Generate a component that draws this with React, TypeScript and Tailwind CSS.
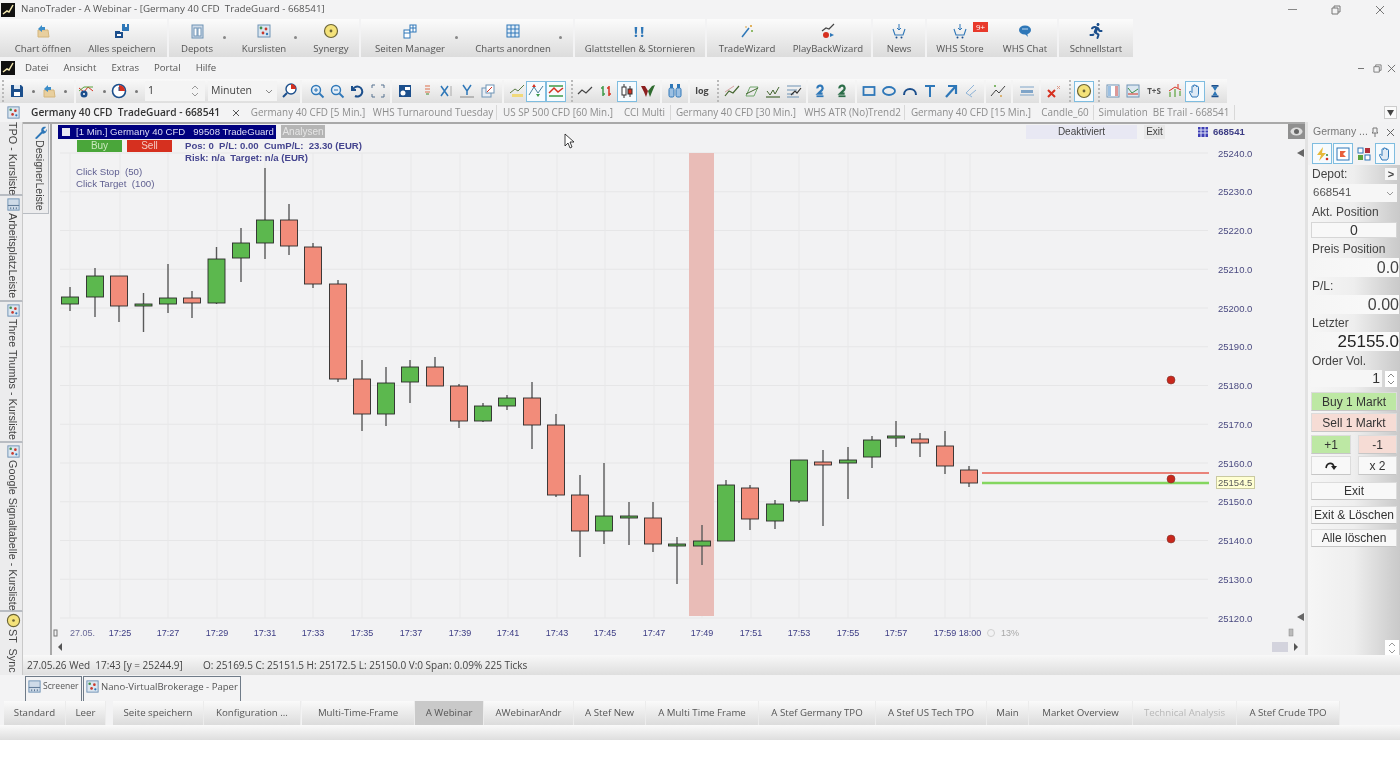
import React from 'react';
import { FaRunning } from 'react-icons/fa';

const BLUE = '#2e77b8';
const NAVY = '#1c4f8c';

function I({ s = 16, children }: { s?: number; children: React.ReactNode }) {
  return <svg className="flex-none" width={s} height={s} viewBox="0 0 16 16" fill="none">{children}</svg>;
}

const Logo = () => (
  <svg width="14" height="14" viewBox="0 0 14 14"><rect width="14" height="14" fill="#111" /><path d="M2 11 L6 8 L8 9 L12 2" stroke="#f4e9b0" strokeWidth="1.5" fill="none" /></svg>
);
const FolderOpen = () => (
  <I><path d="M3 7h10l1 7H3z" fill="#e8cf9e" stroke="#d5b67c" /><path d="M3 6 L7 2 V4 H10 V7 H7 V9z" fill="#3c8dc9" /></I>
);
const SaveAll = () => (
  <I><path d="M1 8h5v1h3v6H1z" fill={NAVY} /><path d="M8 1h3v3h2V1h2v7H8z" fill={BLUE} /><rect x="3" y="11" width="4" height="2" fill="#fff" /></I>
);
const Floppy = () => (
  <I><path d="M2 2h10l2 2v10H2z" fill={NAVY} /><rect x="5" y="2" width="6" height="4" fill="#dfe9f3" /><rect x="5" y="9" width="6" height="4" fill="#fff" /></I>
);
const Depots = () => (
  <I><rect x="3" y="2" width="11" height="13" fill="#cfdbe8" stroke="#6f93b5" /><rect x="5" y="5" width="3" height="8" fill="#fff" stroke="#6f93b5" /><rect x="9" y="5" width="3" height="8" fill="#fff" stroke="#6f93b5" /></I>
);
const Kurs = ({ s = 16 }: { s?: number }) => (
  <I s={s}><rect x="2" y="2" width="12" height="12" fill="#dbe6f0" stroke="#6f93b5" /><circle cx="5" cy="5" r="1.4" fill="#3f8f4a" /><circle cx="10" cy="6" r="1.4" fill="#c9382c" /><circle cx="7" cy="10" r="1.4" fill="#c9382c" /><circle cx="11" cy="11" r="1.2" fill="#2e77b8" /></I>
);
const Synergy = ({ s = 16 }: { s?: number }) => (
  <I s={s}><circle cx="8" cy="8" r="6.5" fill="#f4e27a" stroke="#6b6436" strokeWidth="1.2" /><circle cx="8" cy="8" r="1.4" fill="#6b6436" /></I>
);
const Pages = () => (
  <I><rect x="2" y="7" width="6" height="8" fill="#fff" stroke={BLUE} /><rect x="8" y="2" width="6" height="7" fill="#fff" stroke={BLUE} /><path d="M2 10h6M11 2v7M8 5h6" stroke={BLUE} /></I>
);
const GridIc = () => (
  <I><rect x="2" y="2" width="12" height="12" fill="#e4eef7" stroke={BLUE} /><path d="M2 6h12M2 10h12M6 2v12M10 2v12" stroke={BLUE} /></I>
);
const Wand = () => (
  <I><path d="M3 14 L10 5" stroke={BLUE} strokeWidth="1.5" /><path d="M12 2v2M11 3h2" stroke="#d99a2b" /><circle cx="13" cy="8" r="1" fill="#6fa93c" /><circle cx="7" cy="4" r=".8" fill="#d99a2b" /></I>
);
const PlayBack = () => (
  <I><path d="M2 8 L6 5 L9 6 L14 1" stroke="#444" strokeWidth="1.2" /><circle cx="6" cy="12" r="3" fill="#d6301f" /><path d="M10 10 L14 12 L10 14z" fill={BLUE} /></I>
);
const Basket = () => (
  <I><path d="M2 6 L4 12 H12 L14 6" stroke={BLUE} strokeWidth="1.1" /><path d="M8 1v6M6 5l2 2 2-2" stroke={BLUE} /><circle cx="5.5" cy="14.5" r="1" fill={NAVY} /><circle cx="10.5" cy="14.5" r="1" fill={NAVY} /></I>
);
const Chat = () => (
  <I><ellipse cx="8" cy="7" rx="6" ry="4.5" fill={BLUE} /><path d="M7 10 L11 14 L10 10z" fill={BLUE} /><path d="M5 6h6" stroke="#bcd7ee" /></I>
);
const Doc = ({ s = 16 }: { s?: number }) => <I s={s}><rect x="2" y="2" width="12" height="12" fill="#cfdbe8" stroke="#6f93b5" /><path d="M2 9h12M5 11v2M8 11v2M11 11v2" stroke="#55718f" /></I>;

const Zoom = ({ m }: { m: boolean }) => (
  <I><circle cx="7" cy="7" r="4.5" stroke={BLUE} strokeWidth="1.4" fill="#e4eef7" /><path d="M10.5 10.5 L14.5 14.5" stroke={BLUE} strokeWidth="1.8" /><path d={m ? 'M5 7h4M7 5v4' : 'M5 7h4'} stroke={BLUE} /></I>
);
const Undo = () => <I><path d="M3 3v4h4M3.5 7A5 5 0 1 1 6 13" stroke={NAVY} strokeWidth="2" /></I>;
const Fit = () => <I><path d="M2 2h3M2 2v3M11 2h3v3M2 14h3M2 11v3M14 11v3h-3" stroke="#55718f" /></I>;
const IndIc = () => (
  <I><path d="M1 5 L6 9 L10 4 L15 8" stroke="#d6301f" /><path d="M1 8 L6 4 L15 4" stroke="#5ba33c" /><circle cx="6" cy="11" r="3.5" fill={NAVY} /><circle cx="6" cy="11" r="1" fill="#fff" /></I>
);
const Clock = () => (
  <I><circle cx="8" cy="8" r="6.5" fill="#fff" stroke={NAVY} strokeWidth="1.6" /><path d="M8 2a6 6 0 0 1 6 6H8z" fill="#d6301f" /><path d="M8 4v4" stroke={NAVY} /></I>
);
const ClockPin = () => (
  <I><circle cx="10" cy="6" r="5" fill="#fff" stroke={NAVY} strokeWidth="1.4" /><path d="M10 1a5 5 0 0 1 5 5h-5z" fill="#d6301f" /><path d="M6 10 L2 14" stroke={NAVY} strokeWidth="2" /></I>
);
const Info = () => <I><rect x="2" y="2" width="12" height="12" fill={NAVY} /><rect x="8" y="4" width="5" height="3" fill="#fff" /><circle cx="6" cy="10" r="2.5" fill="#fff" /></I>;
const Stack = () => <I><path d="M6 3h5M6 6h5M6 9h5" stroke="#e39a82" strokeWidth="1.4" /><path d="M7 11h3" stroke="#7aa86a" strokeWidth="1.5" /></I>;
const XBar = () => <I><path d="M3 3 L10 13 M10 3 L3 13" stroke={BLUE} strokeWidth="1.5" /><path d="M13 3v10" stroke="#aaa" /></I>;
const YBar = () => <I><path d="M4 2 L8 8 L12 2 M8 8v4" stroke={BLUE} strokeWidth="1.5" /><path d="M1 14h14" stroke="#888" /></I>;
const Copy = () => <I><rect x="2" y="5" width="9" height="9" fill="#e7edf4" stroke="#6f93b5" /><rect x="6" y="2" width="8" height="8" fill="#fff" stroke="#6f93b5" /><path d="M7 9 L12 4" stroke="#d6301f" /></I>;
const LineY = () => <I><path d="M1 10 L6 6 L9 8 L15 2" stroke="#5a7b45" /><rect x="3" y="11" width="11" height="3" fill="#f0d97a" /></I>;
const LineG = () => <I><path d="M1 12 L6 4 L10 10 L15 3" stroke="#4a7f9a" /><path d="M6 1l2 3H4z" fill="#d6301f" /><path d="M10 14l2-3H8z" fill="#3f9a4a" /></I>;
const CrossG = () => <I><path d="M1 3h14M1 13h14" stroke="#3f9a4a" strokeWidth="1.5" /><path d="M1 10 L6 5 L10 9 L15 5" stroke="#d6301f" strokeWidth="1.5" /></I>;
const Line = () => <I><path d="M1 11 L5 7 L9 10 L15 4" stroke="#444" strokeWidth="1.2" /></I>;
const Bars = () => <I><path d="M5 3v10M3 5h2M5 11h2" stroke="#3f9a4a" strokeWidth="1.5" /><path d="M11 3v10M9 5h2M11 11h2" stroke="#d6301f" strokeWidth="1.5" /></I>;
const Candles = () => <I><path d="M5 1v14" stroke="#333" /><rect x="3" y="4" width="4" height="8" fill="#fff" stroke="#333" /><path d="M11 3v11" stroke="#333" /><rect x="9" y="6" width="4" height="5" fill="#d6301f" stroke="#333" /></I>;
const Heiken = () => <I><path d="M1 3 L4 9 L6 14 L8 8 L5 3z" fill="#8c1f1f" /><path d="M15 2 L12 9 L10 14 L8 8 L12 3z" fill="#2f6b2f" /></I>;
const Binoc = () => <I><rect x="2" y="5" width="5" height="9" rx="1.5" fill="#9cc0e2" stroke={BLUE} /><rect x="9" y="5" width="5" height="9" rx="1.5" fill="#9cc0e2" stroke={BLUE} /><rect x="3" y="1" width="3" height="4" fill={BLUE} /><rect x="10" y="1" width="3" height="4" fill={BLUE} /></I>;
const Tr1 = () => <I><path d="M1 13 L5 8 L9 10 L15 3" stroke="#44652f" strokeWidth="1.2" /><path d="M1 9 L10 3" stroke="#d6a0a0" /></I>;
const Tr2 = () => <I><path d="M2 13 L6 4 H14 L10 13z" stroke="#6fa56a" /><path d="M2 11 L14 5" stroke="#44652f" /></I>;
const Tr3 = () => <I><path d="M1 14h14" stroke="#44652f" strokeWidth="1.2" /><path d="M2 8 L5 12 L8 7 L10 11 L14 4" stroke="#44652f" /></I>;
const Tr4 = () => <I><path d="M1 3h14M1 7h10M1 11h7M1 14h12" stroke="#6f93b5" /><path d="M5 12 L9 8 L11 10 L15 5" stroke="#333" strokeWidth="1.2" /></I>;
const Two = ({ c }: { c: string }) => <I s={14}><path d="M5 5a3 3 0 1 1 5.5 1.5L6 11h5" stroke={c} strokeWidth="2.6" /><path d="M4 14h8" stroke={c} strokeWidth="2" /></I>;
const Curve = () => <I><path d="M2 12c0-8 12-8 12 0" stroke={NAVY} strokeWidth="2" /></I>;
const Arrow = () => <I><path d="M3 14 L12 4" stroke={BLUE} strokeWidth="2.2" /><path d="M5 3h8v8" stroke={BLUE} strokeWidth="2.2" /></I>;
const Fib = () => <I><path d="M11 2 L3 10 L9 14 M13 7 L7 12" stroke="#8fb4d8" /></I>;
const Wave = () => <I><path d="M1 13 L6 7 L9 10 L15 3" stroke="#444" /><circle cx="5" cy="3" r="1" fill="#5ba33c" /><circle cx="11" cy="13" r="1" fill="#d6a04b" /></I>;
const Band = () => <I><path d="M1 4h14" stroke="#7fa4c8" /><rect x="2" y="7" width="12" height="3" fill="#7fa4c8" /><path d="M1 12h14" stroke="#7fa4c8" /></I>;
const Cols = () => <I><rect x="2" y="2" width="12" height="12" fill="#fff" stroke="#6f93b5" /><rect x="3" y="3" width="3" height="10" fill="#9cc0e2" /><rect x="10" y="3" width="3" height="10" fill="#d99" /></I>;
const ChartBox = () => <I><rect x="2" y="2" width="12" height="12" fill="#dce7f1" stroke="#6f93b5" /><path d="M3 5 L7 10 L13 6" stroke="#3f8f4a" /><path d="M3 11h10" stroke="#d6301f" /></I>;
const Tree = () => <I><path d="M2 8 L8 4 L14 7" stroke="#d6301f" /><path d="M3 9v5M8 6v8M13 8v5" stroke="#5ba33c" strokeWidth="1.2" /><path d="M11 1v4" stroke="#d6301f" /></I>;
const Hand = () => <I><path d="M5 14 L2.5 9.5 C2 8 4 8 5 9.5 V3.5 C5 2.5 6.5 2.5 6.5 3.5 V2.5 C6.5 1.5 8 1.5 8 2.5 V3 C8 2 9.7 2 9.7 3 V4 C9.7 3 11.5 3 11.5 4.2 V10 C11.5 12 11 13 10 14z" fill="#dfeaf5" stroke={BLUE} /></I>;
const Hour = () => <I s={14}><path d="M4 2h8M4 14h8" stroke={NAVY} strokeWidth="2" /><path d="M5 3 L8 8 L5 13h6L8 8 L11 3z" fill={BLUE} /></I>;
const Bolt = () => <I><path d="M9 1 L3 9h4l-2 6 7-8H8z" fill="#e6b93a" /><circle cx="13" cy="13" r="1.3" fill="#d6301f" /><circle cx="13" cy="9" r="1.1" fill="#3f8f4a" /></I>;
const Flag = () => <I><rect x="2" y="2" width="12" height="12" fill="#fff" stroke={BLUE} /><path d="M5 5h6L8 8l3 3H5z" fill="#e8603c" /></I>;
const Tiles = () => <I><rect x="2" y="2" width="5" height="5" fill="#fff" stroke={BLUE} /><rect x="9" y="2" width="5" height="5" fill="#b22f3a" /><rect x="2" y="9" width="5" height="5" fill="#5ba33c" /><rect x="9" y="9" width="5" height="5" fill="#fff" stroke={BLUE} /></I>;

type RibbonBtn = { label: string; w: string; icon: React.ReactNode; drop?: string };

const ribbon: { gap: string; items: RibbonBtn[] }[] = [
  { gap: 'w-[167px] pl-[4px]', items: [
    { label: 'Chart öffnen', w: 'w-[78px]', icon: <FolderOpen /> },
    { label: 'Alles speichern', w: 'w-[80px]', icon: <SaveAll /> },
  ] },
  { gap: 'w-[190px]', items: [
    { label: 'Depots', w: 'w-[56px]', icon: <Depots />, drop: 'right-[-1px]' },
    { label: 'Kurslisten', w: 'w-[78px]', icon: <Kurs />, drop: 'right-[6px]' },
    { label: 'Synergy', w: 'w-[56px]', icon: <Synergy /> },
  ] },
  { gap: 'w-[212px]', items: [
    { label: 'Seiten Manager', w: 'w-[98px]', icon: <Pages />, drop: 'right-[1px]' },
    { label: 'Charts anordnen', w: 'w-[108px]', icon: <GridIc />, drop: 'right-[5px]' },
  ] },
  { gap: 'w-[130px]', items: [
    { label: 'Glattstellen & Stornieren', w: 'w-[130px]', icon: <span className="text-[15px] leading-4 font-bold tracking-[2px] text-[#2e77b8]">!!</span> },
  ] },
  { gap: 'w-[164px]', items: [
    { label: 'TradeWizard', w: 'w-[80px]', icon: <Wand /> },
    { label: 'PlayBackWizard', w: 'w-[82px]', icon: <PlayBack /> },
  ] },
  { gap: 'w-[52px]', items: [{ label: 'News', w: 'w-[52px]', icon: <Basket /> }] },
  { gap: 'w-[130px]', items: [
    { label: 'WHS Store', w: 'w-[66px]', icon: <Basket /> },
    { label: 'WHS Chat', w: 'w-[64px]', icon: <Chat /> },
  ] },
  { gap: 'w-[74px]', items: [{ label: 'Schnellstart', w: 'w-[74px]', icon: <FaRunning className="text-[#1c4f8c]" size={16} /> }] },
];

const Box = ({ children }: { children: React.ReactNode }) => (
  <div className="w-[20px] h-[21px] flex items-center justify-center border border-[#7fbde0] bg-[#f6fbfe]">{children}</div>
);
const Grip = () => <div className="h-[22px] border-l-2 border-dotted border-[#b9b9b9]" />;
const Sep = () => <div className="h-[23px] w-[2px] bg-[#f4f4f4]" />;
const Drop = () => <div className="w-[3px] h-[3px] rounded-full bg-[#777]" />;

const tools: { c: number; w?: number; el: React.ReactNode }[] = [
  { c: 3, w: 2, el: <Grip /> },
  { c: 17, el: <Floppy /> }, { c: 33, w: 6, el: <Drop /> }, { c: 49, el: <FolderOpen /> }, { c: 65, w: 6, el: <Drop /> },
  { c: 75, w: 2, el: <Sep /> },
  { c: 86, el: <IndIc /> }, { c: 104, w: 6, el: <Drop /> }, { c: 119, el: <Clock /> }, { c: 136, w: 6, el: <Drop /> },
  { c: 175, w: 60, el: (
    <div className="w-[60px] h-[20px] bg-[#f4f4f4] flex items-center justify-between pl-[3px] pr-[6px] text-[10.5px] text-[#333]">
      <span>1</span>
      <svg width="8" height="14" viewBox="0 0 8 14" fill="none"><path d="M1 5 L4 2 L7 5 M1 9 L4 12 L7 9" stroke="#999" /></svg>
    </div>
  ) },
  { c: 242.5, w: 69, el: (
    <div className="w-[69px] h-[20px] bg-[#f4f4f4] flex items-center justify-between pl-[3px] pr-[4px] text-[10.5px] text-[#444]">
      <span>Minuten</span>
      <svg width="8" height="8" viewBox="0 0 8 8" fill="none"><path d="M1 3 L4 6 L7 3" stroke="#888" /></svg>
    </div>
  ) },
  { c: 289, el: <ClockPin /> },
  { c: 301, w: 2, el: <Sep /> },
  { c: 317, el: <Zoom m /> }, { c: 337, el: <Zoom m={false} /> }, { c: 357, el: <Undo /> }, { c: 378, el: <Fit /> },
  { c: 391, w: 2, el: <Sep /> },
  { c: 405, el: <Info /> }, { c: 427, el: <Stack /> }, { c: 446, el: <XBar /> }, { c: 467, el: <YBar /> }, { c: 488, el: <Copy /> },
  { c: 503, w: 2, el: <Sep /> },
  { c: 517, el: <LineY /> }, { c: 536, el: <Box><LineG /></Box> }, { c: 556, el: <Box><CrossG /></Box> },
  { c: 572, w: 2, el: <Grip /> },
  { c: 585, el: <Line /> }, { c: 606, el: <Bars /> }, { c: 627, el: <Box><Candles /></Box> }, { c: 648, el: <Heiken /> },
  { c: 661, w: 2, el: <Sep /> },
  { c: 675, el: <Binoc /> },
  { c: 689, w: 2, el: <Sep /> },
  { c: 702, el: <span className="text-[9px] font-bold text-[#444]">log</span> },
  { c: 718, w: 2, el: <Grip /> },
  { c: 732, el: <Tr1 /> }, { c: 752, el: <Tr2 /> }, { c: 773, el: <Tr3 /> }, { c: 794, el: <Tr4 /> },
  { c: 807, w: 2, el: <Sep /> },
  { c: 820, el: <Two c={BLUE} /> }, { c: 842, el: <Two c="#2c6e49" /> },
  { c: 856, w: 2, el: <Sep /> },
  { c: 869, el: <I><rect x="2.5" y="4" width="11" height="8" stroke={BLUE} strokeWidth="1.8" /></I> },
  { c: 889, el: <I><ellipse cx="8" cy="8" rx="6" ry="4" stroke={BLUE} strokeWidth="1.8" /></I> },
  { c: 910, el: <Curve /> },
  { c: 930, el: <I><path d="M3 3h10M8 3v11" stroke={BLUE} strokeWidth="2" /></I> },
  { c: 951, el: <Arrow /> }, { c: 971, el: <Fib /> },
  { c: 985, w: 2, el: <Sep /> },
  { c: 998, el: <Wave /> },
  { c: 1012, w: 2, el: <Sep /> },
  { c: 1027, el: <Band /> },
  { c: 1040, w: 2, el: <Sep /> },
  { c: 1053, el: <I><path d="M3 7 L10 14 M10 7 L3 14" stroke="#d6301f" strokeWidth="2" /><path d="M12 3 L15 6 M15 3 L12 6" stroke="#d98" /></I> },
  { c: 1070, w: 2, el: <Grip /> },
  { c: 1084, el: <Box><Synergy /></Box> },
  { c: 1099, w: 2, el: <Grip /> },
  { c: 1113, el: <Cols /> }, { c: 1133, el: <ChartBox /> },
  { c: 1154, el: <span className="text-[8px] font-bold text-[#555]">T+S</span> },
  { c: 1175, el: <Tree /> }, { c: 1195, el: <Box><Hand /></Box> }, { c: 1215, el: <Hour /> },
];

function Toolbar() {
  let right = 0;
  return (
    <div className="h-[24px] w-[1227px] flex items-center bg-gradient-to-b from-[#f9f9f9] to-[#dfdfdf]">
      {tools.map((t, i) => {
        const w = t.w ?? 20;
        const ml = t.c - w / 2 - right;
        right = t.c + w / 2;
        return (
          <div key={i} className="flex-none flex items-center justify-center h-full" style={{ width: w, marginLeft: ml }}>
            {t.el}
          </div>
        );
      })}
    </div>
  );
}

const docTabs = [
  { t: 'Germany 40 CFD [5 Min.]', w: 'w-[124px]' },
  { t: 'WHS Turnaround Tuesday', w: 'w-[127px]', sep: true },
  { t: 'US SP 500 CFD [60 Min.]', w: 'w-[122px]' },
  { t: 'CCI Multi', w: 'w-[52px]', sep: true },
  { t: 'Germany 40 CFD [30 Min.]', w: 'w-[130px]' },
  { t: 'WHS ATR (No)Trend2', w: 'w-[104px]', sep: true },
  { t: 'Germany 40 CFD [15 Min.]', w: 'w-[132px]' },
  { t: 'Candle_60', w: 'w-[57px]', sep: true },
  { t: 'Simulation  BE Trail - 668541', w: 'w-[141px]', sep: true },
];

const leftTabs = [
  { t: 'TPO - Kursliste', h: 'h-[74px]', icon: null },
  { t: 'ArbeitsplatzLeiste', h: 'h-[106px]', icon: <Doc s={15} /> },
  { t: 'Three Thumbs - Kursliste', h: 'h-[141px]', icon: <Kurs s={15} /> },
  { t: 'Google Signaltabelle - Kursliste', h: 'h-[169px]', icon: <Kurs s={15} /> },
  { t: 'ST  Sync', h: 'h-[63px]', icon: <Synergy s={15} /> },
];

// x, wick top, wick bottom, body top, body bottom, colour
const candles: [number, number, number, number, number, 'g' | 'r'][] = [
  [70, 287, 311, 297, 304, 'g'], [95, 268, 317, 276, 297, 'g'], [119, 276, 322, 276, 306, 'r'], [143.5, 293, 332, 304, 306, 'g'],
  [168, 264, 313, 298, 304, 'g'], [192, 291, 318, 298, 303, 'r'], [216.5, 247, 304, 259, 303, 'g'], [241, 228, 282, 243, 258, 'g'],
  [265, 168, 259, 220, 243, 'g'], [289, 204, 255, 220, 246, 'r'], [313, 243, 288, 247, 284, 'r'], [338, 280, 382, 284, 379, 'r'],
  [362, 360, 431, 379, 414, 'r'], [386, 367, 426, 383, 414, 'g'], [410, 360, 403, 367, 382, 'g'], [435, 357, 386, 367, 386, 'r'],
  [459, 384, 428, 386, 421, 'r'], [483, 403, 422, 406, 421, 'g'], [507, 395, 410, 398, 406, 'g'], [532, 382, 449, 398, 425, 'r'],
  [556, 414, 497, 425, 495, 'r'], [580, 475, 557, 495, 531, 'r'], [604, 463, 544, 516, 531, 'g'], [629, 502, 545, 516, 518, 'g'],
  [653, 502, 552, 518, 544, 'r'], [677, 537, 584, 544, 546, 'g'], [702, 525, 565, 541, 546, 'g'], [726, 480, 541, 485, 541, 'g'],
  [750, 485, 530, 488, 519, 'r'], [775, 500, 529, 504, 521, 'g'], [799, 460, 503, 460, 501, 'g'], [823, 450, 526, 462, 465, 'r'],
  [848, 447, 499, 460, 463, 'g'], [872, 436, 468, 440, 457, 'g'], [896, 421, 447, 436, 438, 'g'], [920, 433, 457, 439, 443, 'r'],
  [945, 431, 474, 446, 466, 'r'], [969, 466, 487, 470, 483, 'r'],
];

const prices = [25240, 25230, 25220, 25210, 25200, 25190, 25180, 25170, 25160, 25150, 25140, 25130, 25120];
const times: [number, string][] = [
  [120, '17:25'], [168, '17:27'], [217, '17:29'], [265, '17:31'], [313, '17:33'], [362, '17:35'], [411, '17:37'], [460, '17:39'],
  [508, '17:41'], [557, '17:43'], [605, '17:45'], [654, '17:47'], [702, '17:49'], [751, '17:51'], [799, '17:53'], [848, '17:55'],
  [896, '17:57'], [945, '17:59'], [970, '18:00'],
];

function Chart() {
  const py = (p: number) => 153 + (25240 - p) * 3.875;
  return (
    <svg className="absolute inset-0" width="1253" height="533" viewBox="52 122 1253 533">
      <g>
        {prices.map((p) => <line key={p} x1="60" x2="1208" y1={py(p)} y2={py(p)} stroke="#e6e6e7" />)}
        {[70, ...times.map((t) => t[0])].map((x) => <line key={x} x1={x} x2={x} y1="153" y2="618" stroke="#e8e8e9" />)}
      </g>
      <rect x="689" y="153" width="25" height="463" fill="#e9bcb7" />
      {candles.map(([x, wt, wb, bt, bb, c]) => (
        <g key={x}>
          <line x1={x} x2={x} y1={wt} y2={wb} stroke="#5a5a5a" strokeWidth="1.4" />
          <rect x={x - 8.5} y={bt} width="17" height={bb - bt} fill={c === 'g' ? '#5cb84e' : '#f28c7a'} stroke="#2c2c2c" strokeWidth="0.9" />
        </g>
      ))}
      <line x1="982" x2="1209" y1="473" y2="473" stroke="#e9837a" strokeWidth="2" />
      <line x1="982" x2="1209" y1="483" y2="483" stroke="#84d65f" strokeWidth="2.6" />
      {[380, 479, 539].map((y) => <circle key={y} cx="1171" cy={y} r="4" fill="#c9271c" stroke="#7c3a30" strokeWidth=".6" />)}
      <g className="text-[9.5px]" fill="#4a4a80">
        {prices.map((p) => <text key={p} x="1218" y={py(p) + 3.5}>{p}.0</text>)}
      </g>
      <rect x="1216.5" y="476.5" width="38" height="12" fill="#ffffd2" stroke="#c9c9a0" />
      <text x="1218" y="486" className="text-[9.5px]" fill="#5a5a5a">25154.5</text>
      <g className="text-[9px]" fill="#3c3c84">
        <text x="70" y="636" fill="#6a6a98">27.05.</text>
        {times.map(([x, t]) => <text key={t} x={x} y="636" textAnchor="middle">{t}</text>)}
      </g>
      <circle cx="991" cy="633" r="3.5" fill="none" stroke="#d0d0d0" />
      <text x="1001" y="636" className="text-[9px]" fill="#a8a8a8">13%</text>
      <rect x="54" y="630" width="3" height="6" fill="none" stroke="#777" />
      <rect x="1289" y="629" width="4" height="7" fill="#bbb" stroke="#888" strokeWidth=".5" />
      <path d="M1304 149v8l-7-4z" fill="#666" />
      <path d="M1304 613v8l-7-4z" fill="#666" />
      <path d="M62 643v8l-4-4z" fill="#555" />
      <rect x="1272" y="642" width="16" height="10" fill="#d3d3dd" />
      <path d="M1294 643v8l4-4z" fill="#555" />
      <path d="M565 134v12l3-3 2 5 2-1-2-5h4z" fill="#fff" stroke="#111" strokeWidth=".8" />
    </svg>
  );
}

const btn = 'flex items-center justify-center text-[12px] text-[#333] bg-[#f8f8f8] border border-[#dcdcdc] border-b-[#c6c6c6]';
const Lbl = ({ children, cls }: { children: React.ReactNode; cls: string }) => (
  <div className={`pl-[4px] text-[12px] leading-[14px] text-[#444] ${cls}`}>{children}</div>
);
const Spin = () => (
  <div className="w-[12px] h-[16px] bg-white flex flex-col items-center justify-center">
    <svg width="8" height="12" viewBox="0 0 8 12" fill="none"><path d="M1 4 L4 1 L7 4 M1 8 L4 11 L7 8" stroke="#888" /></svg>
  </div>
);

function RightPanel() {
  return (
    <div className="w-[92px] h-[533px] flex flex-col bg-gradient-to-r from-[#f6f6f6] via-[#eeeeee] to-[#c9c9c9] font-['Liberation_Sans',sans-serif]">
      <div className="h-[20px] flex items-center bg-[#f2f2f3] text-[10.5px] text-[#777] pl-[5px]">
        <span className="w-[57px] whitespace-nowrap">Germany ...</span>
        <svg width="10" height="10" viewBox="0 0 10 10" fill="none"><path d="M3 1h4v4l1 1H2l1-1zM5 6v4" stroke="#777" /></svg>
        <svg className="ml-[6px]" width="9" height="9" viewBox="0 0 9 9" fill="none"><path d="M1 1 L8 8 M8 1 L1 8" stroke="#666" /></svg>
      </div>
      <div className="h-[23px] flex items-center gap-[1px] pl-[4px] bg-[#f2f2f3]">
        <Box><Bolt /></Box><Box><Flag /></Box>
        <div className="w-[20px] flex justify-center"><Tiles /></div>
        <Box><Hand /></Box>
      </div>
      <div className="h-[18px] flex items-center justify-between pl-[4px] pr-[3px] text-[12px] text-[#444]">
        <span>Depot:</span>
        <span className="w-[12px] h-[12px] bg-[#f6f6f6] flex items-center justify-center text-[11px] font-bold leading-none">&gt;</span>
      </div>
      <div className="mx-[3px] mt-[1px] h-[18px] bg-[#f6f6f6] flex items-center justify-between pl-[2px] pr-[3px] text-[11.5px] text-[#555]">
        <span>668541</span>
        <svg width="8" height="8" viewBox="0 0 8 8" fill="none"><path d="M1 3 L4 6 L7 3" stroke="#999" /></svg>
      </div>
      <Lbl cls="mt-[3px]">Akt. Position</Lbl>
      <div className="mx-[3px] mt-[3px] h-[16px] bg-[#f8f8f8] border border-[#d6d6d6] flex items-center justify-center text-[14px] text-[#333]">0</div>
      <Lbl cls="mt-[4px]">Preis Position</Lbl>
      <div className="h-[19px] mt-[2px] mx-[1px] flex items-center justify-end text-[16px] text-[#444] bg-gradient-to-r from-[#f5f5f5] to-[#fafafa]">0.0</div>
      <Lbl cls="mt-[2px]">P/L:</Lbl>
      <div className="h-[19px] mt-[2px] mx-[1px] flex items-center justify-end text-[16px] text-[#444] bg-gradient-to-r from-[#f5f5f5] to-[#fafafa]">0.00</div>
      <Lbl cls="mt-[2px]">Letzter</Lbl>
      <div className="h-[19px] mt-[2px] mx-[1px] flex items-center justify-end text-[17px] text-[#222] bg-gradient-to-r from-[#f5f5f5] to-[#fafafa]">25155.0</div>
      <Lbl cls="mt-[3px]">Order Vol.</Lbl>
      <div className="h-[17px] mt-[2px] ml-[3px] mr-[3px] flex items-center justify-between">
        <div className="w-[71px] text-right text-[14px] text-[#333] bg-[#f6f6f6] pr-[2px] leading-[17px]">1</div>
        <Spin />
      </div>
      <div className="mx-[3px] mt-[5px] flex flex-col gap-[2px]">
        <div className={`${btn} h-[19px] !bg-[#bde8a4]`}>Buy 1 Markt</div>
        <div className={`${btn} h-[19px] !bg-[#f6dcd5]`}>Sell 1 Markt</div>
        <div className="flex justify-between mt-[1px]">
          <div className={`${btn} w-[40px] h-[19px] !bg-[#bde8a4]`}>+1</div>
          <div className={`${btn} w-[39px] h-[19px] !bg-[#f6dcd5]`}>-1</div>
        </div>
        <div className="flex justify-between">
          <div className={`${btn} w-[40px] h-[19px]`}>
            <svg width="12" height="9" viewBox="0 0 12 9" fill="none"><path d="M1 7c1-6 7-6 8-1" stroke="#222" strokeWidth="1.6" /><path d="M6 5h6L9 9z" fill="#222" /></svg>
          </div>
          <div className={`${btn} w-[39px] h-[19px]`}>x 2</div>
        </div>
      </div>
      <div className="mx-[3px] mt-[7px] flex flex-col gap-[5.5px]">
        <div className={`${btn} h-[18px]`}>Exit</div>
        <div className={`${btn} h-[18px]`}>Exit &amp; Löschen</div>
        <div className={`${btn} h-[18px]`}>Alle löschen</div>
      </div>
      <div className="mt-auto self-end w-[14px] h-[15px] mr-[1px] bg-white flex items-center justify-center">
        <svg width="8" height="12" viewBox="0 0 8 12" fill="none"><path d="M1 4 L4 1 L7 4 M1 8 L4 11 L7 8" stroke="#999" /></svg>
      </div>
    </div>
  );
}

const pageTabs = [
  { t: 'Standard', w: 'w-[62px]' }, { t: 'Leer', w: 'w-[40px]' }, { t: 'Seite speichern', w: 'w-[91px] ml-[7px]' },
  { t: 'Konfiguration ...', w: 'w-[97px]' }, { t: 'Multi-Time-Frame', w: 'w-[113px] ml-[1px]' },
  { t: 'A Webinar', w: 'w-[69px]', on: true }, { t: 'AWebinarAndr', w: 'w-[90px]' }, { t: 'A Stef New', w: 'w-[72px]' },
  { t: 'A Multi Time Frame', w: 'w-[113px]' }, { t: 'A Stef Germany TPO', w: 'w-[117px]' }, { t: 'A Stef US Tech TPO', w: 'w-[111px]' },
  { t: 'Main', w: 'w-[42px]' }, { t: 'Market Overview', w: 'w-[104px]' }, { t: 'Technical Analysis', w: 'w-[104px]', off: true },
  { t: 'A Stef Crude TPO', w: 'w-[103px]' },
];

export default function App() {
  return (
    <div className="w-[1400px] h-[775px] overflow-hidden bg-white blur-[0.5px] font-['Open_Sans',sans-serif] text-[#444]">
      {/* title bar */}
      <div className="h-[19px] flex items-center bg-[#f3f3f4]">
        <div className="w-[21px] pl-[1px]"><Logo /></div>
        <span className="text-[9.8px] whitespace-pre text-[#555]">NanoTrader - A Webinar - [Germany 40 CFD  TradeGuard - 668541]</span>
        <div className="ml-auto flex items-center gap-[34px] pr-[15px]">
          <div className="w-[9px] h-[1px] bg-[#888]" />
          <svg width="10" height="10" viewBox="0 0 10 10" fill="none"><path d="M1 3h6v6H1zM3 3V1h6v6H7" stroke="#777" /></svg>
          <svg width="10" height="10" viewBox="0 0 10 10" fill="none"><path d="M1 1 L9 9 M9 1 L1 9" stroke="#777" /></svg>
        </div>
      </div>

      {/* ribbon */}
      <div className="h-[38px] bg-[#f3f3f4] flex">
        {ribbon.map((g, gi) => (
          <div key={gi} className={`${g.gap} flex-none flex bg-gradient-to-b from-[#fbfbfb] to-[#dcdcdc] mr-[2px] last:mr-0`}>
            {g.items.map((b) => (
              <div key={b.label} className={`${b.w} relative flex-none flex flex-col items-center justify-between pt-[4px] pb-[2px]`}>
                <div className="h-[16px] flex items-center justify-center">{b.icon}</div>
                <span className="text-[9.6px] leading-[13px] whitespace-nowrap text-[#555]">{b.label}</span>
                {b.drop && <span className={`absolute ${b.drop} top-[17px] w-[3px] h-[3px] rounded-full bg-[#888]`} />}
                {b.label === 'WHS Store' && <span className="absolute right-[5px] top-[3px] w-[15px] h-[10px] bg-[#e8392b] text-white text-[8px] leading-[10px] text-center">9+</span>}
              </div>
            ))}
          </div>
        ))}
      </div>

      {/* menu */}
      <div className="h-[22px] flex items-center bg-[#f3f3f4]">
        <div className="w-[25px] pl-[1px]"><Logo /></div>
        <div className="flex text-[9.6px] text-[#555]">
          {['Datei', 'Ansicht', 'Extras', 'Portal', 'Hilfe'].map((m) => <span key={m} className="pr-[15px]">{m}</span>)}
        </div>
        <div className="ml-auto flex items-center pr-[4px]">
          <div className="w-[6px] h-[1px] bg-[#777]" />
          <svg className="ml-[9px]" width="9" height="9" viewBox="0 0 10 10" fill="none"><path d="M1 3h6v6H1zM3 3V1h6v6H7" stroke="#777" /></svg>
          <svg className="ml-[5px]" width="9" height="9" viewBox="0 0 10 10" fill="none"><path d="M1 1 L9 9 M9 1 L1 9" stroke="#666" /></svg>
        </div>
      </div>

      {/* toolbar */}
      <div className="bg-[#f3f3f4]"><Toolbar /></div>

      {/* document tabs */}
      <div className="h-[19px] flex items-center bg-[#f3f3f4] text-[9.9px] whitespace-pre">
        <div className="w-[31px] pl-[6px]"><Kurs s={15} /></div>
        <span className="w-[201px] font-semibold text-[#333] text-[10.2px]">Germany 40 CFD  TradeGuard - 668541</span>
        <svg className="mr-[6px] flex-none" width="8" height="8" viewBox="0 0 8 8" fill="none"><path d="M1 1 L7 7 M7 1 L1 7" stroke="#555" /></svg>
        {docTabs.map((d) => (
          <span key={d.t} className={`${d.w} flex-none text-center text-[#8d8d8d] ${d.sep ? 'border-r border-[#d8d8d8]' : ''}`}>{d.t}</span>
        ))}
        <div className="ml-auto mr-[3px] w-[13px] h-[13px] bg-[#fafafa] border border-[#ccc] flex items-center justify-center">
          <svg width="7" height="6" viewBox="0 0 7 6"><path d="M0 0h7L3.5 6z" fill="#444" /></svg>
        </div>
      </div>

      {/* main */}
      <div className="h-[553px] flex">
        <div className="w-[23px] flex-none flex flex-col bg-[#ececed] font-['Liberation_Sans',sans-serif]">
          {leftTabs.map((l) => (
            <div key={l.t} className={`${l.h} flex-none flex flex-col items-center pl-[4px] border-b-2 border-[#b8bcc2] last:border-b-0 border-r border-r-[#c9c9c9]`}>
              {l.icon && <div className="h-[17px] flex-none flex items-center justify-center">{l.icon}</div>}
              <span className="[writing-mode:vertical-rl] text-[10.8px] text-[#444] whitespace-pre leading-[18px]">{l.t}</span>
            </div>
          ))}
        </div>
        <div className="flex-1 flex flex-col">
          <div className="h-[533px] flex">
            <div className="w-[29px] flex-none bg-[#f2f2f3] border-r-2 border-[#a9a9a9] border-t-2 border-t-[#a9a9a9]">
              <div className="h-[90px] w-[26px] pl-[9px] bg-[#ececed] border-r border-b border-[#b8bcc2] flex flex-col items-center font-['Liberation_Sans',sans-serif]">
                <svg className="mt-[1px] flex-none" width="15" height="15" viewBox="0 0 16 16" fill="none"><path d="M2 14 L9 7 C8 3 11 1 14 2 L11 5 L13 7 L15 4 C15 8 12 10 10 9 L4 15z" fill={BLUE} /></svg>
                <span className="[writing-mode:vertical-rl] text-[10.6px] text-[#444] leading-[16px]">DesignerLeiste</span>
              </div>
            </div>
            <div className="relative w-[1253px] flex-none bg-[#f2f2f3] border-t-2 border-[#a9a9a9] font-['Liberation_Sans',sans-serif]">
              <div className="absolute -top-[2px] left-0"><Chart /></div>
              {/* chart overlays */}
              <div className="absolute left-[6px] top-[1px] flex items-start">
                <div className="w-[218px] h-[14px] bg-[#00007f] flex items-center pl-[4px] text-[9.6px] text-[#dcdcf5] whitespace-pre">
                  <span className="w-[8px] h-[8px] flex-none bg-[#e8e8f2] mr-[6px]" />[1 Min.] Germany 40 CFD   99508 TradeGuard
                </div>
                <div className="ml-[5px] w-[44px] h-[13px] bg-[#b5b5b5] text-center text-[10px] leading-[13px] text-[#e5e5e5]">Analysen</div>
              </div>
              <div className="absolute left-[25px] top-[16px] flex gap-[5px]">
                <div className="w-[45px] h-[12px] bg-[#4aa63a] text-center text-[10px] leading-[12px] text-[#c9e8bd]">Buy</div>
                <div className="w-[45px] h-[12px] bg-[#d6301f] text-center text-[10px] leading-[12px] text-[#f5c8c0]">Sell</div>
              </div>
              <div className="absolute left-[133px] top-[16px] text-[9.6px] leading-[12px] font-bold text-[#45458f] whitespace-pre">
                <div>Pos: 0  P/L: 0.00  CumP/L:  23.30 (EUR)</div>
                <div>Risk: n/a  Target: n/a (EUR)</div>
              </div>
              <div className="absolute left-[24px] top-[42px] text-[9.7px] leading-[12px] text-[#5f5f90] whitespace-pre">
                <div>Click Stop  (50)</div>
                <div>Click Target  (100)</div>
              </div>
              <div className="absolute left-[974px] top-[1px] flex items-center h-[14px] text-[10px] text-[#444]">
                <div className="w-[111px] h-[14px] bg-[#e8e8f3] text-center leading-[14px]">Deaktiviert</div>
                <div className="ml-[7px] w-[21px] h-[14px] bg-[#e8e8e8] text-center leading-[14px]">Exit</div>
                <svg className="ml-[32px]" width="12" height="12" viewBox="0 0 12 12"><rect x="1" y="1" width="10" height="10" fill="#3f3fb5" /><path d="M1 4h10M1 7h10M4 1v10M8 1v10" stroke="#dfe3f7" /></svg>
                <span className="ml-[4px] font-bold text-[#3c3c84] text-[9.5px]">668541</span>
              </div>
              <div className="absolute left-[1236px] top-[0px] w-[17px] h-[15px] bg-[#8f8f8f] flex items-center justify-center">
                <svg width="13" height="9" viewBox="0 0 13 9"><ellipse cx="6.5" cy="4.5" rx="6" ry="4" fill="#ddd" /><circle cx="6.5" cy="4.5" r="2.5" fill="#666" /></svg>
              </div>
            </div>
            <div className="w-[3px] flex-none bg-[#e2e2e2]" />
            <RightPanel />
          </div>
          <div className="h-[20px] flex items-center pl-[4px] bg-gradient-to-b from-[#f8f8f8] to-[#dedede] text-[10px] text-[#444] whitespace-pre">
            <span className="w-[176px]">27.05.26 Wed  17:43 [y = 25244.9]</span>
            <span>O: 25169.5 C: 25151.5 H: 25172.5 L: 25150.0 V:0 Span: 0.09% 225 Ticks</span>
          </div>
        </div>
      </div>

      {/* window tabs */}
      <div className="h-[26px] flex items-end pl-[25px] gap-[1px] bg-[#f3f3f4] text-[9.8px] text-[#555] whitespace-nowrap">
        <div className="w-[57px] h-[25px] flex items-start pt-[2px] gap-[1px] pl-[1px] border-x border-t border-[#6f7b88]">
          <Doc s={15} /><span className="leading-[15px] text-[8.6px]">Screener</span>
        </div>
        <div className="w-[158px] h-[25px] flex items-start pt-[2px] gap-[1px] pl-[1px] border-x border-t border-[#6f7b88]">
          <Kurs s={15} /><span className="leading-[15px] text-[9.6px]">Nano-VirtualBrokerage - Paper</span>
        </div>
      </div>

      {/* page tabs */}
      <div className="h-[24px] pl-[4px] flex bg-[#f3f3f4] text-[9.7px] whitespace-nowrap">
        {pageTabs.map((p) => (
          <div key={p.t} className={`${p.w} flex-none flex items-center justify-center border-r border-[#ececec] ${p.on ? 'bg-[#c9c9c9] text-[#444]' : 'bg-gradient-to-b from-[#fafafa] to-[#dcdcdc]'} ${p.off ? 'text-[#b9b9b9]' : 'text-[#555]'}`}>
            {p.t}
          </div>
        ))}
      </div>

      <div className="h-[15px] bg-gradient-to-b from-[#fafafa] to-[#dedede]" />
      <div className="h-[35px] bg-white" />
    </div>
  );
}
